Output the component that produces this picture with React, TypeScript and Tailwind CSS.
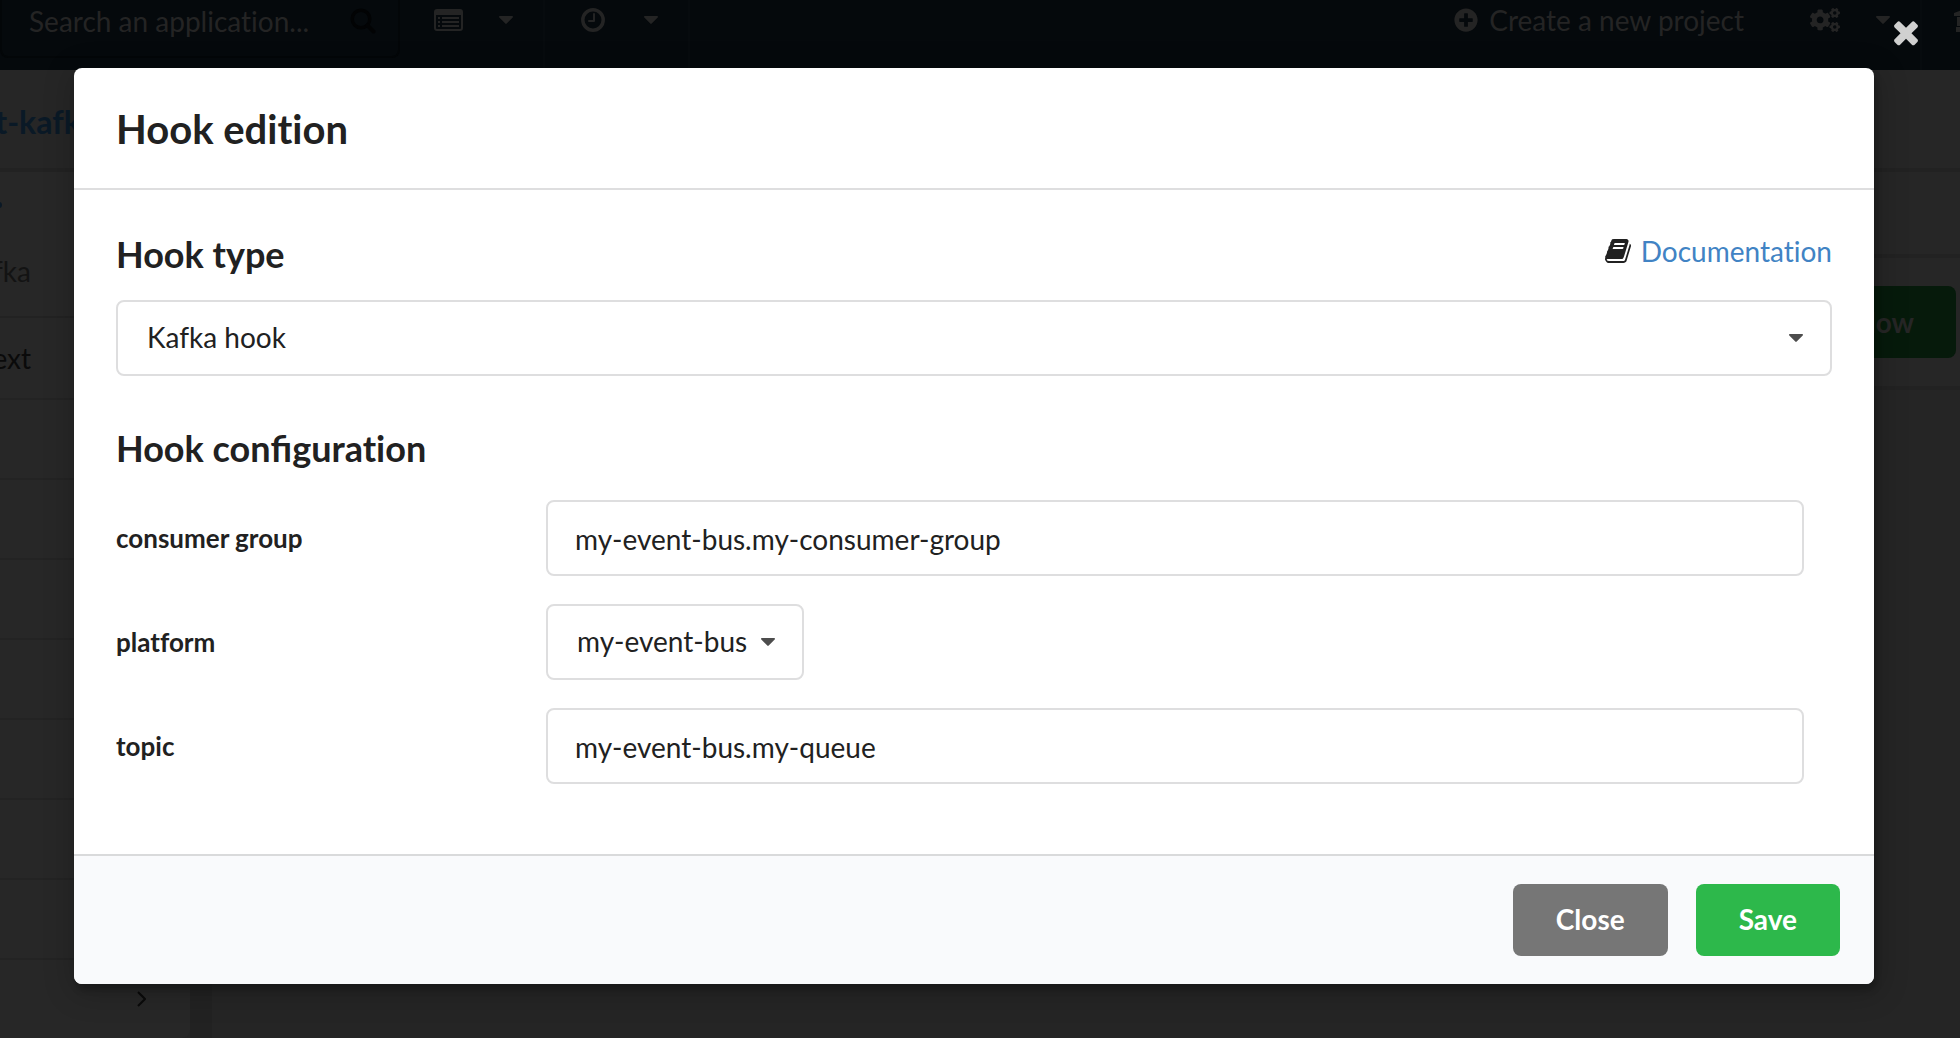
import { useState, type ReactNode } from "react";
import { FaCogs, FaPlusCircle } from "react-icons/fa";

function Caret({ className = "" }: { className?: string }) {
  return (
    <svg viewBox="0 0 14 8" fill="currentColor" className={`h-2 w-3.5 shrink-0 ${className}`} aria-hidden="true">
      <path d="M1 0h12c.9 0 1.3 1 .7 1.6L7.700 7.600a1 1 0 0 1-1.400 0L.3 1.600C-.3 1 .1 0 1 0z" />
    </svg>
  );
}

function ListIcon() {
  return (
    <svg viewBox="0 0 29 22" fill="currentColor" className="h-[22px] w-[29px] shrink-0" aria-hidden="true">
      <path
        fillRule="evenodd"
        d="M3 0h23a3 3 0 0 1 3 3v16a3 3 0 0 1-3 3H3a3 3 0 0 1-3-3V3a3 3 0 0 1 3-3zM2 6v13a1 1 0 0 0 1 1h23a1 1 0 0 0 1-1V6z"
      />
      <path d="M4 8h2v2H4zM8 8h17v2H8zM4 12h2v2H4zM8 12h17v2H8zM4 16h2v2H4zM8 16h17v2H8z" />
    </svg>
  );
}

function ClockIcon() {
  return (
    <svg viewBox="0 0 24 24" fill="none" stroke="currentColor" className="size-6 shrink-0" aria-hidden="true">
      <circle cx="12" cy="12" r="10.200" strokeWidth="3.500" />
      <path d="M13 6v7H8" strokeWidth="2" strokeLinecap="round" strokeLinejoin="round" />
    </svg>
  );
}

function SearchIcon() {
  return (
    <svg viewBox="0 0 26 26" fill="none" stroke="currentColor" className="size-[26px] shrink-0" aria-hidden="true">
      <circle cx="11" cy="11" r="8.800" strokeWidth="3.400" />
      <path d="M17.500 17.500l6 6" strokeWidth="4" strokeLinecap="round" />
    </svg>
  );
}

function BookIcon() {
  return (
    <svg viewBox="0 0 1792 1792" fill="currentColor" className="size-7 shrink-0" aria-hidden="true">
      <path d="M1703 478q40 57 18 129l-275 906q-19 64-76.5 107.5t-122.5 43.5h-923q-77 0-148.5-53.5t-99.5-131.5q-24-67-2-127 0-4 3-27t4-37q1-8-3-21.5t-3-19.5q2-11 8-21t16.5-23.5 16.5-23.5q23-38 45-91.5t30-91.5q3-10 .5-30t-.5-28q3-11 17-28t17-23q21-36 42-92t25-90q1-9-2.5-32t.5-28q4-13 22-30.5t22-22.5q19-26 42.5-84.5t27.5-96.5q1-8-3-25.5t-2-26.5q2-8 9-18t18-23 17-21q8-12 16.5-30.5t15-35 16-36 19.5-32 26.5-23.5 36-11.5 47.5 5.5l-1 3q38-9 51-9h761q74 0 114 56t18 130l-274 906q-36 119-71.5 153.5t-128.5 34.5h-869q-27 0-38 15-11 16-1 43 24 70 144 70h923q29 0 56-15.500t35-41.5l300-987q7-22 5-57 38 15 59 43zm-1064 2q-4 13 2 22.5t20 9.5h608q13 0 25.5-9.5t16.5-22.5l21-64q4-13-2-22.5t-20-9.5h-608q-13 0-25.5 9.5t-16.5 22.5zm-83 256q-4 13 2 22.5t20 9.5h608q13 0 25.5-9.5t16.5-22.5l21-64q4-13-2-22.5t-20-9.5h-608q-13 0-25.5 9.5t-16.5 22.5z" />
    </svg>
  );
}

function CloseIcon() {
  return (
    <svg viewBox="0 0 1792 1792" fill="currentColor" className="size-9" aria-hidden="true">
      <path d="M1490 1322q0 40-28 68l-136 136q-28 28-68 28t-68-28l-294-294-294 294q-28 28-68 28t-68-28l-136-136q-28-28-28-68t28-68l294-294-294-294q-28-28-28-68t28-68l136-136q28-28 68-28t68 28l294 294 294-294q28-28 68-28t68 28l136 136q28 28 28 68t-28 68l-294 294 294 294q28 28 28 68z" />
    </svg>
  );
}

function BuildingIcon() {
  return (
    <svg viewBox="0 0 26 24" fill="currentColor" className="h-6 w-[26px] shrink-0" aria-hidden="true">
      <path d="M0 5 13 0l13 5v3H0zM3 9h4v9H3zM11 9h4v9h-4zM19 9h4v9h-4zM2 19h22v5H2z" />
    </svg>
  );
}

function Divider() {
  return <div className="h-full w-[2px] shrink-0 bg-[#070b0e]" />;
}

function NavBar() {
  return (
    <header className="flex h-[70px] shrink-0 items-start bg-[#05090c] text-[28px] text-[#242424]">
      <div className="flex h-[58px] w-[400px] shrink-0 items-start rounded-b-lg border-2 border-t-0 border-[#030608] pr-[22px] pl-[27px]">
        <input
          aria-label="Search an application"
          placeholder="Search an application..."
          className="h-[42px] min-w-0 flex-1 bg-transparent placeholder:text-[#242424] focus:outline-none"
        />
        <div className="flex h-[42px] items-center text-[#020304]">
          <SearchIcon />
        </div>
      </div>
      <button aria-label="Lists" className="flex h-10 items-center gap-9 pr-[30px] pl-[34px]">
        <ListIcon />
        <Caret />
      </button>
      <Divider />
      <button aria-label="History" className="flex h-10 items-center gap-[39px] pr-[30px] pl-9">
        <ClockIcon />
        <Caret />
      </button>
      <Divider />
      <button className="ml-auto flex h-10 items-center gap-[11px] whitespace-nowrap">
        <FaPlusCircle className="size-6" />
        Create a new project
      </button>
      <button aria-label="Settings" className="ml-[66px] flex h-10 items-center gap-9 pr-[30px]">
        <FaCogs className="size-[30px]" />
        <Caret />
      </button>
      <Divider />
      <button aria-label="Account" className="flex h-10 w-[38px] items-center overflow-hidden pl-8">
        <BuildingIcon />
      </button>
    </header>
  );
}

function SideRow({ children }: { children?: ReactNode }) {
  return <li className="flex h-20 items-center border-b-2 border-[#232323]">{children}</li>;
}

function Page() {
  return (
    <div inert className="flex h-full flex-col overflow-hidden bg-[#252525] text-[28px] leading-[40px]">
      <NavBar />
      <div className="flex h-[102px] shrink-0 items-center border-b-4 border-[#222] bg-[#262626] pt-1.5 text-[32px] font-bold text-[#0a1926]">
        <span className="flex w-[97px] justify-end whitespace-nowrap">t-kafka</span>
      </div>
      <div className="flex min-h-0 flex-1">
        <ul className="w-[190px] shrink-0 rounded-br-lg bg-[#272727]">
          <li className="flex h-[146px] flex-col justify-between border-b-2 border-[#222] pt-[30px] pb-[25px]">
            <span className="-ml-1 size-1.5 rounded-full bg-[#0a1926]" />
            <span className="flex w-[31px] justify-end text-[#131313]">fka</span>
          </li>
          <li className="flex h-[82px] items-center border-b-2 border-[#232323]">
            <span className="flex w-[31px] justify-end text-[#0a0a0a]">ext</span>
          </li>
          <SideRow />
          <SideRow />
          <SideRow />
          <SideRow />
          <SideRow />
          <SideRow />
          <SideRow />
          <li className="flex h-[78px] items-center justify-end pr-11">
            <svg viewBox="0 0 9 16" fill="none" stroke="#0a0a0a" strokeWidth="2" className="h-4 w-[9px]">
              <path d="M1 1l7 7-7 7" />
            </svg>
          </li>
        </ul>
        <div className="w-[22px] bg-[#222]" />
        <div className="flex-1">
          <div className="h-[86px] border-b-4 border-[#222] bg-[#262626]" />
          <div className="flex h-[132px] items-center justify-end border-b-4 border-[#222] bg-[#262626] pr-1">
            <button className="h-[72px] rounded-lg bg-[#061a0b] px-[42px] font-bold text-[#262626]">Run workflow</button>
          </div>
        </div>
      </div>
    </div>
  );
}

const field =
  "h-[76px] rounded-lg border-2 border-[#dededf] bg-white text-[28px] text-[#212121] focus:border-[#85b7d9] focus:outline-none";

function Select({ id, options, fluid = false }: { id: string; options: string[]; fluid?: boolean }) {
  return (
    <div className={fluid ? "relative w-full" : "relative w-fit"}>
      <select id={id} className={`${field} appearance-none pb-0.5 pl-[29px] ${fluid ? "w-full pr-20" : "pr-[54px]"}`}>
        {options.map((o) => (
          <option key={o}>{o}</option>
        ))}
      </select>
      <Caret className="pointer-events-none absolute inset-y-0 right-[29px] my-auto text-[#4d4d4d]" />
    </div>
  );
}

function Row({ id, label, children }: { id: string; label: string; children: ReactNode }) {
  return (
    <div className="grid grid-cols-4 items-center">
      <label htmlFor={id} className="text-[26px] leading-9 font-bold">
        {label}
      </label>
      <div className="col-span-3 pr-7 pl-px">{children}</div>
    </div>
  );
}

export default function App() {
  const [group, setGroup] = useState("my-event-bus.my-consumer-group");
  const [topic, setTopic] = useState("my-event-bus.my-queue");
  return (
    <div className="relative h-screen overflow-hidden font-['Lato',sans-serif] [font-variant-ligatures:none]">
      <Page />
      <div className="absolute inset-0 pt-[68px] pr-[86px] pl-[74px]">
        <button aria-label="Close dialog" className="absolute top-3.5 right-9 text-[#d0d0d0]">
          <CloseIcon />
        </button>
        <div
          role="dialog"
          aria-modal="true"
          aria-labelledby="dialog-title"
          className="overflow-hidden rounded-lg bg-white text-[#212121] shadow-[2px_6px_6px_0_rgba(0,0,0,0.2),2px_6px_30px_4px_rgba(0,0,0,0.2)]"
        >
          <h2
            id="dialog-title"
            className="border-b-2 border-[#dededf] px-[42px] pt-[37px] pb-[35px] text-[40px] leading-[48px] font-bold"
          >
            Hook edition
          </h2>
          <div className="px-[42px] pt-[42px] pb-[70px]">
            <div className="mb-6 flex items-start justify-between">
              <label htmlFor="hook-type" className="text-[36px] leading-[44px] font-bold">
                Hook type
              </label>
              <span className="flex items-center gap-[9px] text-[28px] leading-[38px]">
                <BookIcon />
                <a href="#documentation" className="text-[#4183c4]">
                  Documentation
                </a>
              </span>
            </div>
            <Select id="hook-type" options={["Kafka hook"]} fluid />
            <h3 className="mt-[50px] mb-[30px] text-[36px] leading-[44px] font-bold">
              Hook con<span className="[font-variant-ligatures:normal]">fi</span>guration
            </h3>
            <div className="flex flex-col gap-7">
              <Row id="consumer-group" label="consumer group">
                <input
                  id="consumer-group"
                  value={group}
                  onChange={(e) => setGroup(e.target.value)}
                  className={`${field} w-full px-[27px] pt-0.5`}
                />
              </Row>
              <Row id="platform" label="platform">
                <Select id="platform" options={["my-event-bus"]} />
              </Row>
              <Row id="topic" label="topic">
                <input
                  id="topic"
                  value={topic}
                  onChange={(e) => setTopic(e.target.value)}
                  className={`${field} w-full px-[27px] pt-0.5`}
                />
              </Row>
            </div>
          </div>
          <div className="flex justify-end gap-7 border-t-2 border-[#d9dadb] bg-[#f9fafc] py-7 pr-[34px] text-[28px] font-bold text-white">
            <button className="h-[72px] rounded-lg bg-[#767676] px-[43px] pb-0.5">Close</button>
            <button className="h-[72px] rounded-lg bg-[#2db84b] px-[43px] pb-0.5">Save</button>
          </div>
        </div>
      </div>
    </div>
  );
}
